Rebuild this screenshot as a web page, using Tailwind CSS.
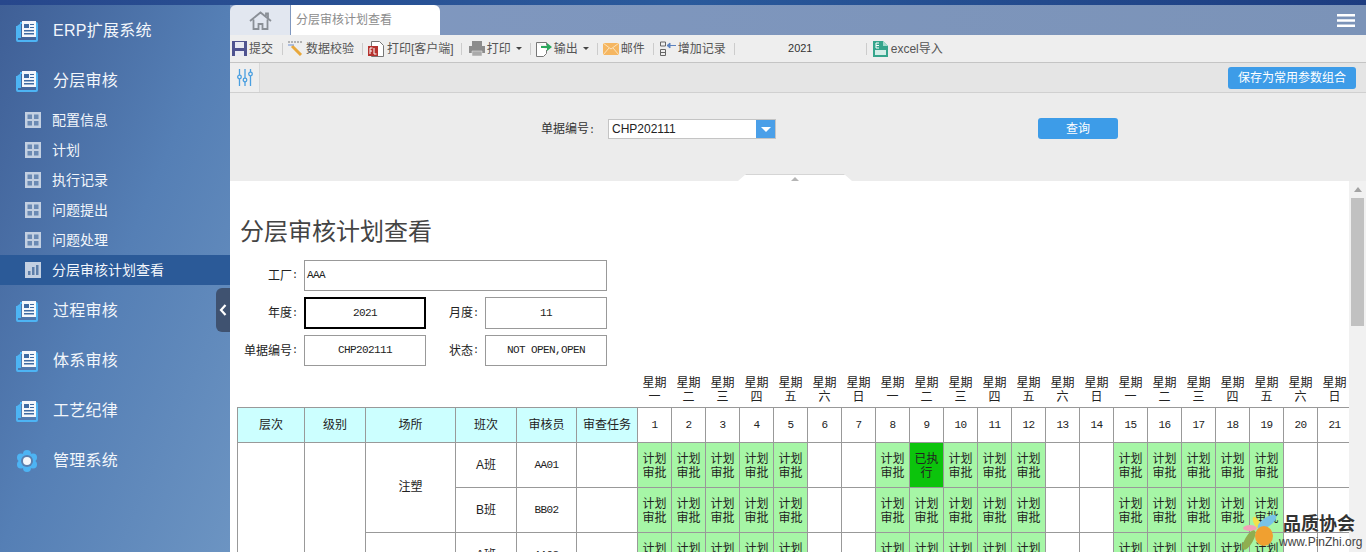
<!DOCTYPE html>
<html lang="zh">
<head>
    <meta charset="UTF-8">
    <title>分层审核计划查看</title>
    <script src="https://cdn.jsdelivr.net/npm/@tailwindcss/browser@4"></script>
</head>
<body class="w-[1366px] h-[552px] overflow-hidden relative bg-white font-['Liberation_Sans','Noto_Sans_CJK_SC',sans-serif]">
    <!-- top band -->
    <div class="h-[5px] bg-gradient-to-r from-[#27478c] via-[#2a5a9c] to-[#1d3c80]"></div>

    <div class="flex h-[547px]">
        <!-- sidebar -->
        <aside class="w-[230px] shrink-0 relative bg-gradient-to-br from-[#3f5f96] via-[#557fb5] to-[#6c94c2] text-white">
            <a class="h-[50px] flex items-center pl-4 pt-px gap-[15px] text-[16px] tracking-[0.25px] text-[#f2f6fb]">
                <svg class="w-[22px] h-[23px]" viewBox="0 0 22 23"><path d="M4 4h16a1 1 0 0 1 1 1v16a1 1 0 0 1-1 1H2a1 1 0 0 1-1-1V7" fill="none" stroke="#4db4f4" stroke-width="2"/><path d="M1 7l4-3v15H1z" fill="#4db4f4"/><rect x="6" y="2" width="14" height="16" fill="#f4f7fb"/><path d="M8 5h5v4H8zM14 5h4v1h-4zM14 8h4v1h-4zM8 11h10v1.500H8zM8 14h10v1.500H8z" fill="#3f6ba3"/></svg>
                <span>ERP扩展系统</span>
            </a>
            <a class="h-[50px] flex items-center pl-4 pt-px gap-[15px] text-[16px] tracking-[0.25px] text-[#f2f6fb]">
                <svg class="w-[22px] h-[23px]" viewBox="0 0 22 23"><path d="M4 4h16a1 1 0 0 1 1 1v16a1 1 0 0 1-1 1H2a1 1 0 0 1-1-1V7" fill="none" stroke="#4db4f4" stroke-width="2"/><path d="M1 7l4-3v15H1z" fill="#4db4f4"/><rect x="6" y="2" width="14" height="16" fill="#f4f7fb"/><path d="M8 5h5v4H8zM14 5h4v1h-4zM8 11h10v1.500H8zM14 8h4v1h-4zM8 14h10v1.500H8z" fill="#3f6ba3"/></svg>
                <span>分层审核</span>
            </a>
            <a class="h-[30px] flex items-center pl-[25px] gap-[11px] text-[14px] text-[#f2f6fb]"><svg class="w-4 h-4" viewBox="0 0 16 16"><path d="M0 0h16v16H0z" fill="#c3d0e2"/><path d="M2.500 2.500h4.500v4.500H2.500zM9 2.500h4.500v4.500H9zM2.500 9h4.500v4.500H2.500zM9 9h4.500v4.500H9z" fill="#6b8ab3"/></svg><span>配置信息</span></a>
            <a class="h-[30px] flex items-center pl-[25px] gap-[11px] text-[14px] text-[#f2f6fb]"><svg class="w-4 h-4" viewBox="0 0 16 16"><path d="M0 0h16v16H0z" fill="#c3d0e2"/><path d="M2.500 2.500h4.500v4.500H2.500zM9 2.500h4.500v4.500H9zM2.500 9h4.500v4.500H2.500zM9 9h4.500v4.500H9z" fill="#6b8ab3"/></svg><span>计划</span></a>
            <a class="h-[30px] flex items-center pl-[25px] gap-[11px] text-[14px] text-[#f2f6fb]"><svg class="w-4 h-4" viewBox="0 0 16 16"><path d="M0 0h16v16H0z" fill="#c3d0e2"/><path d="M2.500 2.500h4.500v4.500H2.500zM9 2.500h4.500v4.500H9zM2.500 9h4.500v4.500H2.500zM9 9h4.500v4.500H9z" fill="#6b8ab3"/></svg><span>执行记录</span></a>
            <a class="h-[30px] flex items-center pl-[25px] gap-[11px] text-[14px] text-[#f2f6fb]"><svg class="w-4 h-4" viewBox="0 0 16 16"><path d="M0 0h16v16H0z" fill="#c3d0e2"/><path d="M2.500 2.500h4.500v4.500H2.500zM9 2.500h4.500v4.500H9zM2.500 9h4.500v4.500H2.500zM9 9h4.500v4.500H9z" fill="#6b8ab3"/></svg><span>问题提出</span></a>
            <a class="h-[30px] flex items-center pl-[25px] gap-[11px] text-[14px] text-[#f2f6fb]"><svg class="w-4 h-4" viewBox="0 0 16 16"><path d="M0 0h16v16H0z" fill="#c3d0e2"/><path d="M2.500 2.500h4.500v4.500H2.500zM9 2.500h4.500v4.500H9zM2.500 9h4.500v4.500H2.500zM9 9h4.500v4.500H9z" fill="#6b8ab3"/></svg><span>问题处理</span></a>
            <a class="h-[30px] flex items-center pl-[25px] gap-[11px] text-[14px] text-[#f2f6fb] bg-[#2b5a98]"><svg class="w-4 h-4" viewBox="0 0 16 16"><path d="M0 0h16v16H0z" fill="#c3d0e2"/><path d="M3 13V9h2.500v4zM7 13V5h2.500v8zM11 13V3h2.500v10z" fill="#5d7ea9"/></svg><span>分层审核计划查看</span></a>
            <a class="h-[50px] flex items-center pl-4 pt-px gap-[15px] text-[16px] tracking-[0.25px] text-[#f2f6fb]">
                <svg class="w-[22px] h-[23px]" viewBox="0 0 22 23"><path d="M4 4h16a1 1 0 0 1 1 1v16a1 1 0 0 1-1 1H2a1 1 0 0 1-1-1V7" fill="none" stroke="#4db4f4" stroke-width="2"/><path d="M1 7l4-3v15H1z" fill="#4db4f4"/><rect x="6" y="2" width="14" height="16" fill="#f4f7fb"/><path d="M8 5h5v4H8zM14 5h4v1h-4zM14 8h4v1h-4zM8 11h10v1.500H8zM8 14h10v1.500H8z" fill="#3f6ba3"/></svg>
                <span>过程审核</span>
            </a>
            <a class="h-[50px] flex items-center pl-4 pt-px gap-[15px] text-[16px] tracking-[0.25px] text-[#f2f6fb]">
                <svg class="w-[22px] h-[23px]" viewBox="0 0 22 23"><path d="M4 4h16a1 1 0 0 1 1 1v16a1 1 0 0 1-1 1H2a1 1 0 0 1-1-1V7" fill="none" stroke="#4db4f4" stroke-width="2"/><path d="M1 7l4-3v15H1z" fill="#4db4f4"/><rect x="6" y="2" width="14" height="16" fill="#f4f7fb"/><path d="M8 5h5v4H8zM14 5h4v1h-4zM14 8h4v1h-4zM8 11h10v1.500H8zM8 14h10v1.500H8z" fill="#3f6ba3"/></svg>
                <span>体系审核</span>
            </a>
            <a class="h-[50px] flex items-center pl-4 pt-px gap-[15px] text-[16px] tracking-[0.25px] text-[#f2f6fb]">
                <svg class="w-[22px] h-[23px]" viewBox="0 0 22 23"><path d="M4 4h16a1 1 0 0 1 1 1v16a1 1 0 0 1-1 1H2a1 1 0 0 1-1-1V7" fill="none" stroke="#4db4f4" stroke-width="2"/><path d="M1 7l4-3v15H1z" fill="#4db4f4"/><rect x="6" y="2" width="14" height="16" fill="#f4f7fb"/><path d="M8 5h5v4H8zM14 5h4v1h-4zM14 8h4v1h-4zM8 11h10v1.500H8zM8 14h10v1.500H8z" fill="#3f6ba3"/></svg>
                <span>工艺纪律</span>
            </a>
            <a class="h-[50px] flex items-center pl-4 pt-px gap-[15px] text-[16px] tracking-[0.25px] text-[#f2f6fb]">
                <svg class="w-[22px] h-[22px]" viewBox="0 0 22 22"><g fill="#4db4f4"><circle cx="11" cy="4" r="4"/><circle cx="11" cy="18" r="4"/><circle cx="5" cy="7.500" r="4"/><circle cx="17" cy="7.500" r="4"/><circle cx="5" cy="14.500" r="4"/><circle cx="17" cy="14.500" r="4"/></g><circle cx="11" cy="11" r="6" fill="#5a7fae"/><circle cx="11" cy="11" r="4" fill="#f4f7fb"/></svg>
                <span>管理系统</span>
            </a>
            <!-- collapse handle -->
            <div class="absolute right-0 top-[283px] w-[14px] h-[44px] rounded-l-md bg-[#3f5270] flex items-center justify-center">
                <svg class="w-2 h-3" viewBox="0 0 8 12"><path d="M6.500 1L2 6l4.500 5" fill="none" stroke="#fff" stroke-width="2.200"/></svg>
            </div>
        </aside>

        <!-- main -->
        <main class="flex-1 min-w-0 flex flex-col">
            <!-- tabs -->
            <div class="h-[30px] shrink-0 flex bg-gradient-to-r from-[#8098c0] to-[#7b93b8]">
                <div class="w-[60px] bg-[#e2e7f0] rounded-tl-md flex items-center justify-center">
                    <svg class="w-[23px] h-[19px]" viewBox="0 0 23 19"><path d="M1 10L11.500 1.500 22 10M4.500 8.500V18h5v-5h4v5h5V8.500M17 5V2.500h2V7" fill="none" stroke="#8a8f96" stroke-width="1.800"/></svg>
                </div>
                <div class="w-[149px] ml-px bg-white rounded-tr-md flex items-center pl-[5px] text-[12px] text-[#8c8c8c]">分层审核计划查看</div>
                <div class="flex-1 flex items-center justify-end pr-[11px]">
                    <svg class="w-[18px] h-[13px]" viewBox="0 0 18 13"><path d="M0 0h18v2.500H0zM0 5.200h18v2.500H0zM0 10.500h18V13H0z" fill="#fff"/></svg>
                </div>
            </div>
            <!-- toolbar -->
            <div class="h-[28px] shrink-0 bg-[#eeeeee] border-b border-[#c4c4c4] flex items-center text-[12px] text-[#555] pl-[2px]">
                <svg class="w-[15px] h-[15px]" viewBox="0 0 15 15"><path d="M0 0h15v15H0z" fill="#4f5390"/><path d="M3 1h9v6H3z" fill="#e9eaf3"/><path d="M3 10h9v5H3z" fill="#e9eaf3"/></svg>
                <span class="ml-[2px]">提交</span>
                <i class="ml-[9px] w-px h-3 bg-[#ccc]"></i>
                <svg class="ml-[5px] w-[15px] h-[15px]" viewBox="0 0 15 15"><path d="M4 5l9 9" stroke="#e8a83c" stroke-width="3"/><path d="M0 1h15" stroke="#777" stroke-width="1" stroke-dasharray="2 1"/><path d="M0 4h6" stroke="#6f8fd0" stroke-width="1"/></svg>
                <span class="ml-[3px]">数据校验</span>
                <i class="ml-2 w-px h-3 bg-[#ccc]"></i>
                <svg class="ml-[5px] w-4 h-4" viewBox="0 0 16 16"><path d="M3.500.500h8l4 4v11h-12z" fill="#fff" stroke="#777"/><rect x="0" y="5" width="10" height="10" fill="#b5322e"/><path d="M2 7v6M2 7h2.500M2 10h2M6 7v6h2.500" fill="none" stroke="#fff" stroke-width="1"/></svg>
                <span class="ml-[3px]">打印[客户端]</span>
                <i class="ml-[7px] w-px h-3 bg-[#ccc]"></i>
                <svg class="ml-[7px] w-4 h-[15px]" viewBox="0 0 16 15"><path d="M3 0h10v5H3zM0 5h16v7H0z" fill="#8c8c8c"/><path d="M3 10h10v5H3z" fill="#aaa" stroke="#eee" stroke-width=".5"/></svg>
                <span class="ml-[2px]">打印</span>
                <i class="ml-[5px] border-x-[3px] border-x-transparent border-t-[3px] border-t-[#444]"></i>
                <i class="ml-2 w-px h-3 bg-[#ccc]"></i>
                <svg class="ml-[5px] w-4 h-4" viewBox="0 0 16 16"><path d="M.500 1.500h10v3M.500 1.500v14h7l3-3V9" fill="#fff" stroke="#777"/><path d="M5 5h6V2l5 4-5 4V7H5z" fill="#2aa85c"/></svg>
                <span class="ml-[2px]">输出</span>
                <i class="ml-[5px] border-x-[3px] border-x-transparent border-t-[3px] border-t-[#444]"></i>
                <i class="ml-2 w-px h-3 bg-[#ccc]"></i>
                <svg class="ml-[5px] w-4 h-3" viewBox="0 0 16 12"><path d="M0 0h16v12H0z" fill="#f5b661"/><path d="M0 0l8 6 8-6M0 12l6-7M16 12l-6-7" fill="none" stroke="#fbe3bd" stroke-width="1"/></svg>
                <span class="ml-[2px]">邮件</span>
                <i class="ml-2 w-px h-3 bg-[#ccc]"></i>
                <svg class="ml-[6px] w-4 h-[15px]" viewBox="0 0 16 15"><path d="M.500 1h5v4h-5zM.500 8.500h5v6h-5zM.500 11.500h5" fill="none" stroke="#666"/><path d="M7 4.500h9M7 4.500l3-2.500v5z" fill="#5b82c0" stroke="#5b82c0"/></svg>
                <span class="ml-[2px]">增加记录</span>
                <i class="ml-2 w-px h-3 bg-[#ccc]"></i>
                <span class="w-[131px] text-center text-[#333] text-[11px]">2021</span>
                <i class="w-px h-3 bg-[#ccc]"></i>
                <svg class="ml-[6px] w-[15px] h-4" viewBox="0 0 15 16"><path d="M0 0h10l5 5v11H0z" fill="#35a58c"/><path d="M10 0v5h5z" fill="#a5dccf"/><path d="M2 9h11v5H2z" fill="#d4eee8"/><path d="M3 2v5h3M3 4.500h3M3 2h3" fill="none" stroke="#fff"/></svg>
                <span class="ml-[3px]">excel导入</span>
            </div>
            <!-- filter bar -->
            <div class="h-[30px] shrink-0 flex bg-[#e5e5e5] border-b border-[#d0d0d0]">
                <div class="w-[30px] bg-[#eeeeee] border-r border-[#d8d8d8] flex items-center justify-center">
                    <svg class="w-[16px] h-[17px]" viewBox="0 0 16 17"><g fill="none" stroke="#4a9fe0" stroke-width="1.300"><path d="M2.500 0v6M2.500 10v7M8 0v9M8 13v4M13.500 0v3M13.500 7v10"/><circle cx="2.500" cy="8" r="1.800"/><circle cx="8" cy="11" r="1.800"/><circle cx="13.500" cy="5" r="1.800"/></g></svg>
                </div>
                <div class="flex-1 flex items-center justify-end pr-[10px]">
                    <button class="w-[128px] h-[22px] rounded-[3px] bg-[#3d9ce8] text-white text-[12px] leading-none">保存为常用参数组合</button>
                </div>
            </div>
            <!-- query panel -->
            <div class="h-[88px] shrink-0 bg-[#ececec] relative flex items-start pt-[26px] pl-[311px] text-[12px] text-[#333]">
                <span class="leading-[20px] w-[67px]">单据编号<span class="font-['Liberation_Mono'] text-[10px]">:</span></span>
                <div class="w-[168px] h-[20px] bg-white border border-[#c4c4c4] flex">
                    <span class="flex-1 pl-[3px] leading-[19px] text-[#222]">CHP202111</span>
                    <span class="w-[19px] bg-[#4a9fe8] flex items-center justify-center"><i class="border-x-[5px] border-x-transparent border-t-[5px] border-t-white"></i></span>
                </div>
                <button class="ml-[262px] -mt-px w-[80px] h-[21px] rounded-[3px] bg-[#3d9ce8] text-white text-[12px] leading-none">查询</button>
                <!-- collapse tab -->
                <div class="absolute left-[508px] bottom-0 w-[114px] h-[7px] bg-white border-t border-[#d5d5d5] [clip-path:polygon(8px_0,106px_0,114px_100%,0_100%)] flex justify-center">
                    <i class="mt-px border-x-[4px] border-x-transparent border-b-[4px] border-b-[#b5b5b5]"></i>
                </div>
            </div>
            <!-- report area -->
            <div class="flex-1 min-h-0 flex">
                <div class="w-[1119px] overflow-hidden bg-white pl-[7px] pt-[37px] text-[#222]">
                    <h1 class="ml-[3px] h-[28px] text-[24px] leading-[28px] font-normal text-[#444]">分层审核计划查看</h1>
                    <div class="mt-[14px] grid grid-cols-[67px_122px_59px_122px] grid-rows-[31px_32px_31px] gap-y-[6px] text-[12px]">
                        <div class="flex items-center justify-end pr-[6px]">工厂<span class="font-['Liberation_Mono'] text-[10px]">:</span></div>
                        <div class="col-span-3 border border-[#999] flex items-center pl-[2px] font-['Liberation_Mono'] text-[11px] tracking-[-0.6px]">AAA</div>
                        <div class="flex items-center justify-end pr-[6px]">年度<span class="font-['Liberation_Mono'] text-[10px]">:</span></div>
                        <div class="border-2 border-black flex items-center justify-center font-['Liberation_Mono'] text-[11px] tracking-[-0.6px]">2021</div>
                        <div class="flex items-center justify-end pr-[6px]">月度<span class="font-['Liberation_Mono'] text-[10px]">:</span></div>
                        <div class="border border-[#999] flex items-center justify-center font-['Liberation_Mono'] text-[11px] tracking-[-0.6px]">11</div>
                        <div class="flex items-center justify-end pr-[6px]">单据编号<span class="font-['Liberation_Mono'] text-[10px]">:</span></div>
                        <div class="border border-[#999] flex items-center justify-center font-['Liberation_Mono'] text-[11px] tracking-[-0.6px]">CHP202111</div>
                        <div class="flex items-center justify-end pr-[6px]">状态<span class="font-['Liberation_Mono'] text-[10px]">:</span></div>
                        <div class="border border-[#999] flex items-center justify-center font-['Liberation_Mono'] text-[11px] tracking-[-0.6px]">NOT OPEN,OPEN</div>
                    </div>
                    <table id="plan" class="mt-[9px] table-fixed border-collapse text-[12px] leading-[14px] text-center w-[1114px]">
                        <colgroup>
                            <col class="w-[67px]"><col class="w-[61px]"><col class="w-[90px]"><col class="w-[61px]"><col class="w-[60px]"><col class="w-[61px]">
                        </colgroup>
                        <tbody id="plan-body"></tbody>
                    </table>
                </div>
                <!-- scrollbar -->
                <div class="w-[17px] bg-[#f1f1f1] flex flex-col items-center pt-[6px]">
                    <i class="border-x-[4px] border-x-transparent border-b-[5px] border-b-[#a3a3a3]"></i>
                    <div class="mt-[6px] w-[13px] h-[128px] bg-[#c1c1c1]"></div>
                </div>
            </div>
        </main>
    </div>

    <!-- watermark -->
    <div class="absolute left-[1241px] top-[514px] w-[125px] h-[38px]">
        <svg class="absolute left-0 top-0 w-[36px] h-[38px]" viewBox="0 0 36 38">
            <ellipse cx="9" cy="14" rx="7" ry="3" fill="#f2a0b8"/>
            <ellipse cx="8" cy="26" rx="4" ry="11" fill="#8fae50" transform="rotate(30 8 26)"/>
            <ellipse cx="16" cy="9" rx="3" ry="7" fill="#f4e04c" transform="rotate(-30 16 9)"/>
            <ellipse cx="26" cy="8" rx="11" ry="4.500" fill="#79c3e6" transform="rotate(-35 26 8)"/>
            <ellipse cx="23" cy="22" rx="9" ry="10" fill="#f0a030"/>
        </svg>
        <div class="absolute left-[42px] top-[1px] text-[18px] leading-[18px] font-bold text-[#333] whitespace-nowrap">品质协会</div>
        <div class="absolute left-[38px] top-[21px] text-[12px] leading-[14px] text-[#444] whitespace-nowrap font-['Liberation_Sans']">www.PinZhi.org</div>
    </div>

    <script>
        // day columns: which are weekend, and what the cells say
        const week = ['一', '二', '三', '四', '五', '六', '日'];
        const body = document.getElementById('plan-body');
        const cols = document.querySelector('#plan colgroup');
        const th = 'border border-[#999] bg-[#ccffff] font-normal pt-px';
        const mono = "font-['Liberation_Mono'] text-[11px] tracking-[-0.6px]";

        for (let d = 1; d <= 21; d++) {
            const col = document.createElement('col');
            col.className = 'w-[34px]';
            cols.appendChild(col);
        }

        let weekRow = '<tr class="h-[32px]"><td colspan="6"></td>';
        let headRow = `<tr class="h-[35px]">
            <th class="${th}">层次</th><th class="${th}">级别</th><th class="${th}">场所</th>
            <th class="${th}">班次</th><th class="${th}">审核员</th><th class="${th}">审查任务</th>`;
        for (let d = 1; d <= 21; d++) {
            weekRow += `<td class="border-b border-[#999] px-[4px] leading-[14px] align-bottom pb-[3px]">星期<br>${week[(d - 1) % 7]}</td>`;
            headRow += `<td class="border border-[#999] ${mono}">${d}</td>`;
        }
        body.innerHTML = weekRow + '</tr>' + headRow + '</tr>';

        const rows = [
            { site: '注塑', span: 2, shift: 'A班', who: 'AA01' },
            { shift: 'B班', who: 'BB02' },
            { site: '', span: 1, shift: 'A班', who: 'AA03' }
        ];
        rows.forEach((r, i) => {
            let html = '<tr class="h-[45px]">';
            if (i === 0) html += '<td rowspan="3" class="border border-[#999]"></td><td rowspan="3" class="border border-[#999]"></td>';
            if (r.span) html += `<td rowspan="${r.span}" class="border border-[#999]">${r.site}</td>`;
            html += `<td class="border border-[#999]">${r.shift}</td><td class="border border-[#999] ${mono}">${r.who}</td><td class="border border-[#999]"></td>`;
            for (let d = 1; d <= 21; d++) {
                const weekend = d % 7 === 6 || d % 7 === 0;
                if (weekend) html += '<td class="border border-[#999]"></td>';
                else if (i === 0 && d === 9) html += '<td class="border border-[#999] bg-[#0cc40c] px-[4px] pt-[2px] text-[#222]">已执行</td>';
                else html += '<td class="border border-[#999] bg-[#a6f6a6] px-[4px] pt-[2px] text-[#222]">计划审批</td>';
            }
            body.insertAdjacentHTML('beforeend', html + '</tr>');
        });
    </script>
</body>
</html>
